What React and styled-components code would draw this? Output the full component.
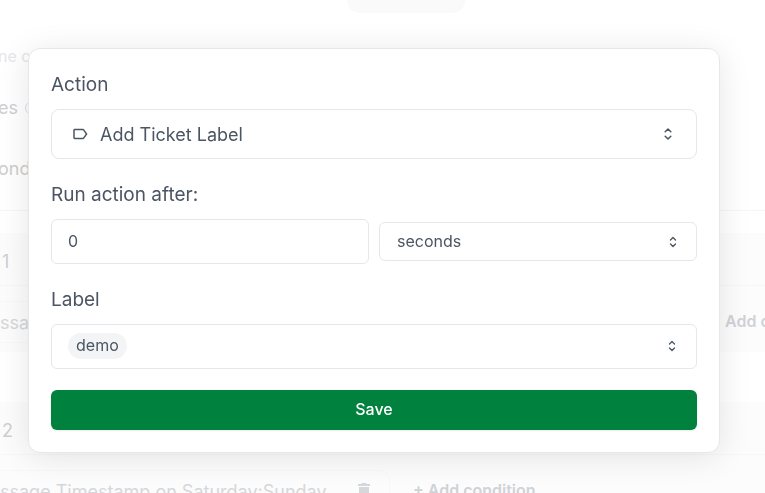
import React, { useState } from "react";
import styled, { createGlobalStyle } from "styled-components";
import { MdLabelOutline } from "react-icons/md";
import { HiOutlineChevronUpDown } from "react-icons/hi2";

const GlobalStyle = createGlobalStyle`
  * {
    box-sizing: border-box;
  }

  body {
    margin: 0;
    background-color: white;
    color: #4b5563;
    font-family: "Inter", "Liberation Sans", sans-serif;
    font-size: 16px;
    overflow: hidden;
  }
`;

// faded page behind the dialog
const Page = styled.div`
  height: 100vh;
  margin-left: -2px;
  overflow: hidden;
  white-space: nowrap;
  color: #cfcfd2;
  font-size: 18px;
`;

const TopBar = styled.div`
  display: flex;
  justify-content: center;
  padding-left: 48px;
`;

const TopPill = styled.div`
  width: 118px;
  height: 13px;
  background-color: #fafafa;
  border-radius: 0 0 20px 20px;
`;

const Hint = styled.p`
  margin: 31px 0 0;
  font-size: 16px;
  line-height: 24px;
  color: #e6e6e9;
`;

const Heading = styled.div`
  display: flex;
  align-items: center;
  gap: 7px;
  margin-top: 26px;
  line-height: 28px;
`;

const Circle = styled.span`
  width: 14px;
  height: 14px;
  border: 1px solid #dddddf;
  border-radius: 50%;
`;

const SubHeading = styled.div`
  padding: 33px 0 27px;
  line-height: 28px;
  color: #cfcdcb;
  border-bottom: 1px solid #f6f6f6;
`;

const Group = styled.section`
  margin-top: ${(props) => (props.$first ? 22 : 50)}px;
  background-color: #fcfcfc;
`;

const GroupTitle = styled.div`
  padding: 15px 4px 9px;
  line-height: 28px;
  border-bottom: 1px solid #f7f7f7;
`;

const Conditions = styled.div`
  display: flex;
  align-items: center;
  padding: 15px 0 9px;
`;

const Condition = styled.div`
  display: flex;
  align-items: center;
  flex: 0 0 392px;
  height: 42px;
  padding-left: 2px;
  border: 1px solid #f8f8f9;
  border-left: none;
  border-radius: 0 10px 10px 0;
  color: #d5d7da;
`;

const ConditionText = styled.span`
  flex: 0 0 358px;
`;

const AddCondition = styled.button`
  padding: 0 0 2px;
  margin-left: ${(props) => (props.$wide ? 335 : 23)}px;
  border: none;
  background: none;
  color: #d0d2d6;
  font-family: inherit;
  font-size: 16px;
  font-weight: 600;
`;

const Overlay = styled.div`
  position: fixed;
  inset: 0;
  padding: 48px 45px 0 28px;
`;

const Dialog = styled.form`
  display: flex;
  flex-direction: column;
  gap: 21px;
  padding: 21px 22px 22px;
  background-color: white;
  border: 1px solid #e5e7eb;
  border-radius: 12px;
  box-shadow: 0 4px 32px rgba(0, 0, 0, 0.1);
`;

const Field = styled.div`
  display: flex;
  flex-direction: column;
  gap: 9px;
`;

const Label = styled.label`
  font-size: 19px;
  line-height: 30px;
`;

const Row = styled.div`
  display: grid;
  grid-template-columns: 1fr 1fr;
  align-items: center;
  gap: 10px;
`;

const SelectBox = styled.div`
  display: grid;
  align-items: center;

  & > * {
    grid-area: 1 / 1;
  }

  svg {
    pointer-events: none;
  }
`;

const Select = styled.select`
  appearance: none;
  width: 100%;
  height: ${(props) => (props.$large ? 50 : 39)}px;
  padding: ${(props) => (props.$large ? "0 48px" : "0 48px 1px 17px")};
  background-color: white;
  border: 1px solid #e5e7eb;
  border-radius: ${(props) => (props.$large ? 8 : 6)}px;
  color: inherit;
  font-family: inherit;
  font-size: ${(props) => (props.$large ? 18 : 16)}px;
`;

const LabelIcon = styled(MdLabelOutline)`
  margin-left: 20px;
  font-size: 18px;
`;

const Chevrons = styled(HiOutlineChevronUpDown)`
  justify-self: end;
  margin-right: ${(props) => (props.$large ? 20 : 16)}px;
  font-size: ${(props) => (props.$large ? 18 : 16)}px;
  stroke-width: 2;
`;

const Input = styled.input`
  width: 100%;
  height: 45px;
  padding: 0 16px 1px;
  border: 1px solid #e5e7eb;
  border-radius: 6px;
  color: inherit;
  font-family: inherit;
  font-size: 16px;
`;

const TagSelect = styled.button`
  display: flex;
  align-items: center;
  justify-content: space-between;
  height: 45px;
  padding: 0 0 2px 16px;
  background-color: white;
  border: 1px solid #e5e7eb;
  border-radius: 6px;
  color: inherit;
  font-family: inherit;
  font-size: 16px;
`;

const Tag = styled.span`
  padding: 0 8px 1px;
  line-height: 25px;
  background-color: #f3f4f6;
  border-radius: 13px;
`;

const SaveButton = styled.button`
  height: 40px;
  padding: 0 0 2px;
  background-color: #00813d;
  border: none;
  border-radius: 6px;
  box-shadow: 0 1px 2px rgba(0, 0, 0, 0.08);
  color: white;
  font-family: inherit;
  font-size: 16px;
  font-weight: 500;
  cursor: pointer;
`;

function TrashIcon() {
  return (
    <svg width="12" height="16" viewBox="0 0 12 16" fill="currentColor">
      <path d="M0 1h3l1-1h4l1 1h3v2H0zM1 4h10v10a2 2 0 0 1-2 2H3a2 2 0 0 1-2-2z" />
    </svg>
  );
}

function Background() {
  return (
    <Page aria-hidden="true">
      <TopBar>
        <TopPill />
      </TopBar>
      <Hint>ne cr</Hint>
      <Heading>
        es <Circle />
      </Heading>
      <SubHeading>ond</SubHeading>
      <Group $first>
        <GroupTitle>1</GroupTitle>
        <Conditions>
          <Condition>ssa</Condition>
          <AddCondition $wide tabIndex={-1}>
            Add condition
          </AddCondition>
        </Conditions>
      </Group>
      <Group>
        <GroupTitle>2</GroupTitle>
        <Conditions>
          <Condition>
            <ConditionText>ssage Timestamp on Saturday:Sunday</ConditionText>
            <TrashIcon />
          </Condition>
          <AddCondition tabIndex={-1}>+ Add condition</AddCondition>
        </Conditions>
      </Group>
    </Page>
  );
}

function App() {
  const [action, setAction] = useState("label");
  const [delay, setDelay] = useState("0");
  const [unit, setUnit] = useState("seconds");

  return (
    <>
      <GlobalStyle />
      <Background />
      <Overlay>
        <Dialog
          role="dialog"
          aria-label="Action"
          onSubmit={(e) => e.preventDefault()}
        >
          <Field>
            <Label htmlFor="action">Action</Label>
            <SelectBox>
              <Select
                $large
                id="action"
                value={action}
                onChange={(e) => setAction(e.target.value)}
              >
                <option value="label">Add Ticket Label</option>
              </Select>
              <LabelIcon />
              <Chevrons $large />
            </SelectBox>
          </Field>
          <Field>
            <Label htmlFor="delay">Run action after:</Label>
            <Row>
              <Input
                id="delay"
                type="text"
                inputMode="numeric"
                value={delay}
                onChange={(e) => setDelay(e.target.value)}
              />
              <SelectBox>
                <Select
                  aria-label="Time unit"
                  value={unit}
                  onChange={(e) => setUnit(e.target.value)}
                >
                  <option value="seconds">seconds</option>
                  <option value="minutes">minutes</option>
                  <option value="hours">hours</option>
                </Select>
                <Chevrons />
              </SelectBox>
            </Row>
          </Field>
          <Field>
            <Label htmlFor="tags">Label</Label>
            <TagSelect id="tags" type="button" aria-haspopup="listbox">
              <Tag>demo</Tag>
              <Chevrons />
            </TagSelect>
          </Field>
          <SaveButton type="submit">Save</SaveButton>
        </Dialog>
      </Overlay>
    </>
  );
}

export default App;
